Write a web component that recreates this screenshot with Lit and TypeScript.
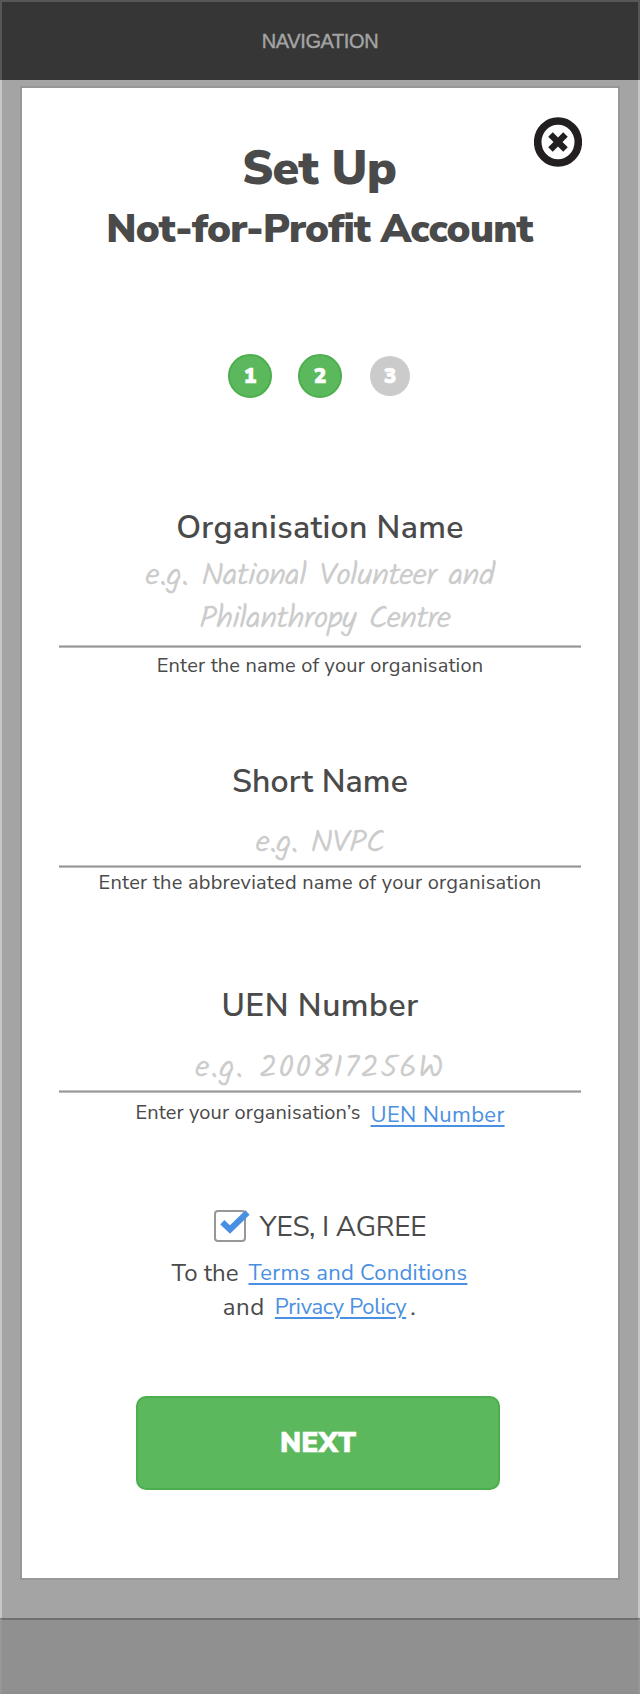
import { LitElement, html, css } from "lit";
import { customElement, property } from "lit/decorators.js";

@customElement("form-field")
class FormField extends LitElement {
  @property() label = "";
  @property({ attribute: false }) hints: string[] = [];
  static styles = css`
    :host { display: flex; flex-direction: column; align-items: center; width: 522px; color: #4a4a4a; }
    .label { font-size: 32px; line-height: 40px; font-weight: 600; white-space: nowrap; letter-spacing: var(--label-spacing, 0.34px); }
    .hints { margin-top: var(--hint-gap, 20px); }
    .hint {
      font: 300 32px/43px Kalam, Caveat, Lato, cursive;
      height: 43px; color: #cbcbcb; white-space: pre; text-align: center;
      letter-spacing: var(--hint-spacing, -0.5px); -webkit-text-stroke: 0.6px #cbcbcb;
    }
    .hint + .hint { padding-left: 10px; }
    .rule { align-self: stretch; height: 3px; background: linear-gradient(#c4c4c4 1px, #979797 1px 2px, #bcbcbc 2px); margin-top: var(--rule-gap, 0); }
    .help {
      display: flex; align-items: flex-start; margin-top: var(--help-gap, 0);
      font-size: 20px; line-height: 28px; white-space: nowrap; letter-spacing: var(--help-spacing, 0.24px);
    }
  `;
  render() {
    return html`
      <div class="label">${this.label}</div>
      <div class="hints">${this.hints.map((h) => html`<div class="hint">${h}</div>`)}</div>
      <div class="rule"></div>
      <div class="help"><slot></slot></div>
    `;
  }
}

@customElement("app-root")
class AppRoot extends LitElement {
  static styles = css`
    :host { display: block; font-family: "Nunito Sans", Lato, "Open Sans", sans-serif; color: #4a4a4a; }
    * { box-sizing: border-box; }
    .screen { display: flex; flex-direction: column; height: 1694px; width: 640px; }
    .nav {
      height: 80px; background: #363636; border: 2px solid #575757; border-bottom: 0;
      display: flex; align-items: center; justify-content: center; flex: none;
      color: #a4a4a4; font: 20px/24px "Liberation Sans", Arial, sans-serif; letter-spacing: -0.4px;
      -webkit-text-stroke: 0.4px #a4a4a4;
    }
    .body { height: 1538px; flex: none; background: #a4a4a4; border: solid #c7c7c7; border-width: 0 2px; padding: 6px 18px 0; }
    .footer { flex: 1; background: #909090; border: 2px solid #979797; border-top-color: #707070; border-bottom-color: #8e8e8e; }
    .modal {
      height: 1494px; background: #fff; border: 2px solid #979797; position: relative;
      display: flex; flex-direction: column; align-items: center;
    }
    .close { position: absolute; left: 512px; top: 29px; }
    h1, h2 { margin: 0; white-space: nowrap; font-weight: 900; }
    h1 { margin: 52px 2px 0 0; font-size: 48px; line-height: 56px; letter-spacing: -0.56px; }
    h2 { margin: 9px 1px 0 0; font-size: 40px; line-height: 48px; letter-spacing: -0.8px; }
    .steps { display: flex; align-items: center; gap: 26px; margin: 101px 2px 110px 0; }
    .step {
      width: 44px; height: 44px; border-radius: 50%; background: #5cb85c; border: 2px solid #4cae4c; color: #fff;
      display: flex; align-items: center; justify-content: center; font-size: 21px; line-height: 26px; font-weight: 900;
      -webkit-text-stroke: 0.5px #fff;
    }
    .step.todo { width: 40px; height: 40px; background: #cbcbcb; border: 0; margin-left: 2px; }
    .org { --hint-gap: 7px; --rule-gap: 4px; --help-gap: 4px; --hint-spacing: -0.34px; --help-spacing: 0.18px; }
    .short { margin-top: 82px; --label-spacing: 0.06px; --help-gap: 1px; }
    .uen { margin-top: 89px; --hint-gap: 21px; --label-spacing: 0.5px; --help-gap: 6px; --hint-spacing: 1.2px; --help-spacing: 0.14px; }
    a { color: #4a90e2; text-decoration: underline; text-decoration-thickness: 2px; text-underline-offset: 3px; font-size: 22px; white-space: nowrap; }
    .uen a { margin: 2px 0 0 10px; letter-spacing: 0.34px; }
    .agree { display: flex; margin-top: 81px; gap: 14px; font-size: 28px; line-height: 32px; letter-spacing: -0.28px; }
    .agree span { padding-top: 1px; height: 32px; white-space: nowrap; }
    .check { display: block; overflow: visible; }
    .terms { display: flex; align-items: flex-start; font-size: 24px; line-height: 32px; height: 32px; margin: 15px 1px 0 0; white-space: nowrap; }
    .terms a { letter-spacing: 0.26px; margin-left: 10px; }
    .policy { margin-top: 2px; letter-spacing: 0.6px; }
    .policy a { letter-spacing: -0.3px; margin-right: 4px; }
    button {
      margin: 73px 4px 0 0; width: 364px; height: 94px; border: 2px solid #4cae4c; border-radius: 10px; background: #5cb85c;
      color: #fff; font: 900 28px/34px "Nunito Sans", Lato, sans-serif; padding: 0;
      -webkit-text-stroke: 0.4px #fff;
    }
  `;
  render() {
    return html`
      <div class="screen">
        <div class="nav">NAVIGATION</div>
        <div class="body">
          <div class="modal">
            <svg class="close" width="48" height="50" viewBox="0 0 48 50">
              <ellipse cx="24" cy="25" rx="20.3" ry="21" fill="none" stroke="#231f20" stroke-width="7.6" />
              <path d="M16.5 17.5 L31.5 32.5 M31.5 17.5 L16.5 32.5" stroke="#231f20" stroke-width="6.4" />
            </svg>
            <h1>Set Up</h1>
            <h2>Not-for-Profit Account</h2>
            <div class="steps">
              <div class="step">1</div>
              <div class="step">2</div>
              <div class="step todo">3</div>
            </div>
            <form-field class="org" label="Organisation Name" .hints=${["e.g. National Volunteer and", "Philanthropy Centre"]}>Enter the name of your organisation</form-field>
            <form-field class="short" label="Short Name" .hints=${["e.g. NVPC"]}>Enter the abbreviated name of your organisation</form-field>
            <form-field class="uen" label="UEN Number" .hints=${["e.g. 200817256W"]}><span>Enter your organisation’s</span><a>UEN Number</a></form-field>
            <div class="agree">
              <svg class="check" width="32" height="32" viewBox="0 0 32 32">
                <rect x="1" y="1" width="30" height="30" rx="3" fill="#fff" stroke="#979797" stroke-width="2" />
                <path d="M8.3 12.3 L16 19.5 L33.5 2.5" fill="none" stroke="#4a90e2" stroke-width="6" />
              </svg>
              <span>YES, I AGREE</span>
            </div>
            <div class="terms"><span>To the</span><a>Terms and Conditions</a></div>
            <div class="terms policy"><span>and</span><a>Privacy Policy</a><span>.</span></div>
            <button>NEXT</button>
          </div>
        </div>
        <div class="footer"></div>
      </div>
    `;
  }
}
